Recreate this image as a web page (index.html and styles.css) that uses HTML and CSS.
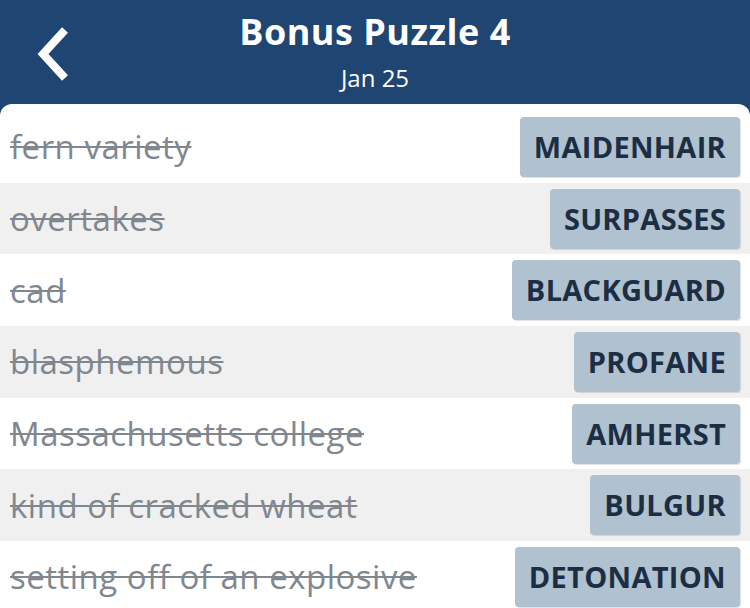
FILE: index.html
```html
<!DOCTYPE html>
<html lang="en">
<head>
    <meta charset="UTF-8">
    <title>Bonus Puzzle 4</title>
    <link rel="stylesheet" href="styles.css">
</head>
<body>
    <div class="header">
        <a href="javascript:;" class="back">
            <svg width="40" height="56" viewBox="0 0 40 56">
                <polyline points="32,4 10,28 32,52" fill="none" stroke="#fff" stroke-width="8" stroke-linejoin="miter"/>
            </svg>
        </a>
        <div class="title">Bonus Puzzle 4</div>
        <div class="date">Jan 25</div>
    </div>
    <div class="list">
        <div class="row"><span class="clue">fern variety</span><span class="answer">MAIDENHAIR</span></div>
        <div class="row"><span class="clue">overtakes</span><span class="answer">SURPASSES</span></div>
        <div class="row"><span class="clue">cad</span><span class="answer">BLACKGUARD</span></div>
        <div class="row"><span class="clue">blasphemous</span><span class="answer">PROFANE</span></div>
        <div class="row"><span class="clue">Massachusetts college</span><span class="answer">AMHERST</span></div>
        <div class="row"><span class="clue">kind of cracked wheat</span><span class="answer">BULGUR</span></div>
        <div class="row"><span class="clue">setting off of an explosive</span><span class="answer">DETONATION</span></div>
    </div>
</body>
</html>
```

FILE: styles.css
```css
*{
    margin:0; padding: 0; text-decoration:none; box-sizing: border-box;
}
body {
    background: #1f4572; font-family: "Open Sans", "Noto Sans", sans-serif; height: 608px; overflow: hidden;
}
.header {
    position: relative; height: 104px; text-align: center; color: #fff; padding-top: 9px;
}
.title {
    font-size: 36px; font-weight: bold; line-height: 46px; letter-spacing: .5px;
}
.date {
    font-size: 24px; line-height: 36px; margin-top: 5px;
}
.back {
    position: absolute; left: 33px; top: 26px; display: block;
}
.list {
    background: #fff; border-radius: 12px 12px 0 0; padding-top: 7px; height: 504px;
}
.row {
    display: flex; align-items: center; justify-content: space-between; height: 71.7px; padding: 0 10px;
}
.row:nth-child(even) {
    background: #f0f0f0;
}
.clue {
    font-size: 33px; letter-spacing: .5px; color: #80878f; text-decoration: line-through; text-decoration-thickness: 2px;
}
.answer {
    background: #b0c1d0; color: #1c2e44; font-weight: bold; font-size: 29px; letter-spacing: .3px; height: 60px; line-height: 60px; padding: 0 14px; border-radius: 4px; box-shadow: 1px 1px 1px rgba(0,0,0,.12);
}
```
